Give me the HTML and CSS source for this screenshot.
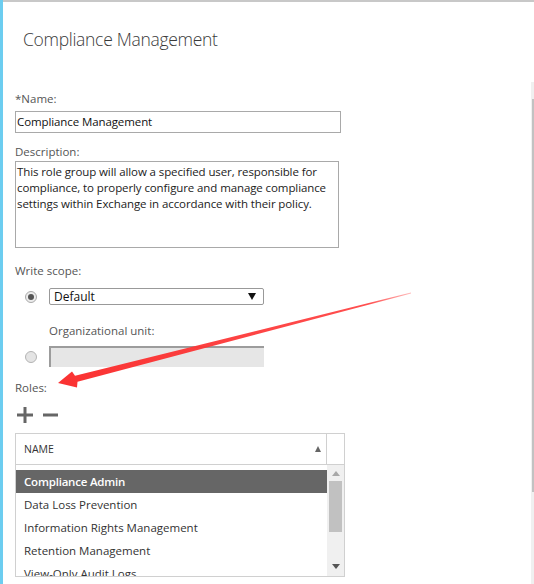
FILE: index.html
```html
<!DOCTYPE html>
<html>
<head>
<meta charset="utf-8">
<link rel="stylesheet" href="styles.css">
</head>
<body>
<div class="app">
  <div class="accent"></div>
  <div class="main">
    <div class="content">
      <h1 class="title">Compliance Management</h1>
      <div class="form">
        <div class="label lbl-name">*Name:</div>
        <div class="input name-input">Compliance Management</div>
        <div class="label lbl-desc">Description:</div>
        <div class="textarea">This role group will allow a specified user, responsible for<br>compliance, to properly configure and manage compliance<br>settings within Exchange in accordance with their policy.</div>
        <div class="label lbl-scope">Write scope:</div>
        <div class="scope-row">
          <span class="radio checked"></span>
          <div class="select"><span>Default</span><span class="caret"></span></div>
        </div>
        <div class="label ou-label">Organizational unit:</div>
        <div class="scope-row ou-row">
          <span class="radio"></span>
          <div class="ou-input"></div>
        </div>
        <div class="label lbl-roles">Roles:</div>
        <div class="icon-row">
          <svg class="ico" width="16" height="16" viewBox="0 0 16 16"><rect x="0" y="6.5" width="16" height="3" fill="#666"/><rect x="6.5" y="0" width="3" height="16" fill="#666"/></svg>
          <svg class="ico" width="15" height="16" viewBox="0 0 15 16"><rect x="0" y="6.5" width="15" height="3" fill="#666"/></svg>
        </div>
        <div class="grid">
          <div class="grid-head">
            <div class="head-cell"><span>NAME</span><span class="sort"></span></div>
            <div class="head-spacer"></div>
          </div>
          <div class="grid-body">
            <div class="rows">
              <div class="row selected">Compliance Admin</div>
              <div class="row">Data Loss Prevention</div>
              <div class="row">Information Rights Management</div>
              <div class="row">Retention Management</div>
              <div class="row">View-Only Audit Logs</div>
            </div>
            <div class="vscroll">
              <span class="up"></span>
              <span class="thumb"></span>
              <span class="down"></span>
            </div>
          </div>
        </div>
      </div>
    </div>
    <div class="page-scroll"><div class="page-thumb"></div></div>
  </div>
  <svg class="arrow" width="534" height="584" viewBox="0 0 534 584">
    <defs>
      <linearGradient id="fade" x1="411" y1="293" x2="58" y2="383" gradientUnits="userSpaceOnUse">
        <stop offset="0" stop-color="#ff3b3b" stop-opacity="0.35"/>
        <stop offset="0.12" stop-color="#ff3b3b" stop-opacity="0.9"/>
        <stop offset="1" stop-color="#fa3232"/>
      </linearGradient>
    </defs>
    <polygon fill="url(#fade)" points="58,383 72,371.5 75,375.8 411,292.6 411,293.6 77.5,381.8 77,387.5"/>
  </svg>
</div>
</body>
</html>
```
FILE: styles.css
```css
html, body {
  margin: 0;
  padding: 0;
  background: #fff;
}
body {
  font-family: "Open Sans", "Liberation Sans", sans-serif;
  color: #444;
  overflow: hidden;
}
.app {
  position: relative;
  display: flex;
  width: 534px;
  height: 584px;
  overflow: hidden;
}
.accent {
  width: 3px;
  background: #6ccdf0;
  flex: none;
}
.main {
  flex: 1;
  display: flex;
  border-top: 2px solid #c8c8c8;
}
.content {
  flex: 1;
}
.page-scroll {
  width: 3px;
  margin-top: 80px;
  background: #f0f0f0;
  display: flex;
  justify-content: flex-end;
}
.page-thumb {
  width: 2px;
  margin-top: 17px;
  height: 393px;
  background: #c2c2c2;
}
.title {
  margin: 25px 0 0 20px;
  font-size: 17.5px;
  letter-spacing: -0.3px;
  line-height: 24px;
  font-weight: 300;
  color: #3a3a3a;
}
.form {
  margin-left: 12px;
  display: flex;
  flex-direction: column;
  align-items: flex-start;
}
.label {
  font-size: 11.5px;
  line-height: 16px;
  color: #555;
}
.lbl-name { margin-top: 40px; }
.input {
  box-sizing: border-box;
  width: 326px;
  height: 22px;
  border: 1px solid #a9a9a9;
  padding: 0 1px;
  font-size: 11.5px;
  letter-spacing: -0.1px;
  line-height: 20px;
  color: #111;
  margin-top: 4px;
}
.lbl-desc { margin-top: 11px; }
.textarea {
  box-sizing: border-box;
  width: 324px;
  height: 87px;
  border: 1px solid #a9a9a9;
  padding: 2px 1px;
  font-size: 11.5px;
  letter-spacing: -0.1px;
  line-height: 16px;
  color: #222;
  margin-top: 1px;
  white-space: nowrap;
}
.lbl-scope { margin-top: 15px; }
.scope-row {
  display: flex;
  align-items: center;
  margin-top: 9px;
  margin-left: 10px;
  gap: 12px;
}
.radio {
  box-sizing: border-box;
  width: 12px;
  height: 12px;
  border-radius: 50%;
  border: 1px solid #b4b4b4;
  background: #e4e4e4;
  display: flex;
  align-items: center;
  justify-content: center;
}
.radio.checked {
  background: #ececec;
  border-color: #aaa;
}
.radio.checked::after {
  content: "";
  width: 6px;
  height: 6px;
  border-radius: 50%;
  background: #555;
}
.select {
  box-sizing: border-box;
  width: 215px;
  height: 17px;
  border: 1px solid #999;
  border-radius: 2px;
  display: flex;
  align-items: center;
  justify-content: space-between;
  padding: 0 7px 0 4px;
  font-size: 12px;
  line-height: 15px;
  color: #111;
}
.caret {
  width: 0;
  height: 0;
  border-left: 4.5px solid transparent;
  border-right: 4.5px solid transparent;
  border-top: 7px solid #111;
}
.ou-label { margin-top: 18px; margin-left: 34px; }
.ou-row { margin-top: 7px; }
.ou-input {
  box-sizing: border-box;
  width: 215px;
  height: 21px;
  background: #e6e6e6;
  border-top: 2px solid #9c9c9c;
  border-left: 2px solid #9c9c9c;
}
.lbl-roles { margin-top: 13px; }
.icon-row {
  display: flex;
  gap: 10px;
  margin-top: 11px;
  margin-left: 2px;
}
.ico { display: block; }
.grid {
  margin-top: 10px;
  box-sizing: border-box;
  width: 330px;
  border: 1px solid #d0d0d0;
}
.grid-head {
  display: flex;
  height: 30px;
  border-bottom: 1px solid #d0d0d0;
}
.head-cell {
  border-right: 1px solid #d0d0d0;
  display: flex;
  align-items: center;
  justify-content: space-between;
  padding: 0 5px 0 8px;
  width: 297px;
  font-size: 10.5px;
  color: #333;
}
.sort {
  width: 0;
  height: 0;
  border-left: 3.5px solid transparent;
  border-right: 3.5px solid transparent;
  border-bottom: 6px solid #666;
}
.head-spacer { flex: 1; }
.grid-body {
  display: flex;
  height: 111px;
  overflow: hidden;
}
.rows {
  width: 311px;
  padding-top: 5px;
}
.row {
  height: 23px;
  line-height: 23px;
  padding-left: 8px;
  font-size: 11.5px;
  color: #333;
  white-space: nowrap;
}
.row.selected {
  height: 22.5px;
  line-height: 23px;
  background: #666;
  color: #fff;
  font-weight: 600;
  letter-spacing: -0.2px;
}
.vscroll {
  flex: 1;
  background: #f0f0f0;
  display: flex;
  flex-direction: column;
  align-items: center;
}
.up {
  margin-top: 6px;
  width: 0;
  height: 0;
  border-left: 4.5px solid transparent;
  border-right: 4.5px solid transparent;
  border-bottom: 5px solid #a8a8a8;
}
.thumb {
  margin-top: 5px;
  width: 13px;
  height: 51px;
  background: #c1c1c1;
}
.down {
  margin-top: 32px;
  width: 0;
  height: 0;
  border-left: 4.5px solid transparent;
  border-right: 4.5px solid transparent;
  border-top: 5px solid #555;
}
.arrow {
  position: absolute;
  left: 0;
  top: 0;
  pointer-events: none;
}
```
